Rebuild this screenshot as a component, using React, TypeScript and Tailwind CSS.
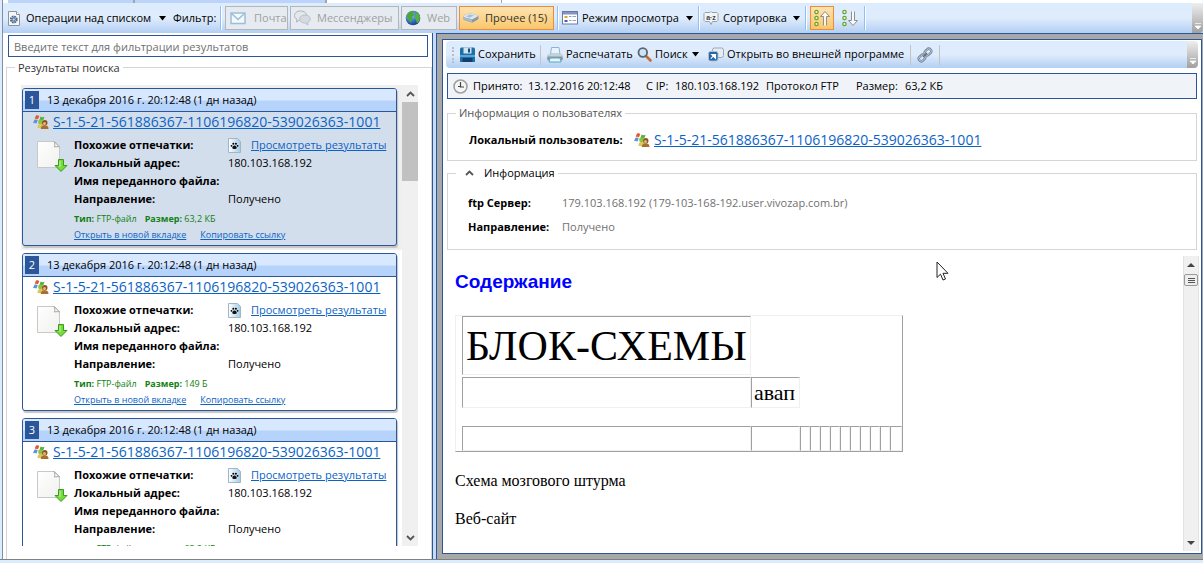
import React from 'react';

interface ResultItem {
  id: number;
  date: string;
  user: string;
  address: string;
  direction: string;
  type: string;
  size: string;
  selected?: boolean;
}

const SID = 'S-1-5-21-561886367-1106196820-539026363-1001';

const results: ResultItem[] = [
  { id: 1, date: '13 декабря 2016 г. 20:12:48 (1 дн назад)', user: SID, address: '180.103.168.192', direction: 'Получено', type: 'FTP-файл', size: '63,2 КБ', selected: true },
  { id: 2, date: '13 декабря 2016 г. 20:12:48 (1 дн назад)', user: SID, address: '180.103.168.192', direction: 'Получено', type: 'FTP-файл', size: '149 Б' },
  { id: 3, date: '13 декабря 2016 г. 20:12:48 (1 дн назад)', user: SID, address: '180.103.168.192', direction: 'Получено', type: 'FTP-файл', size: '63,2 КБ' },
];

// ---------- icons ----------

const Caret = () => (
  <svg width="7" height="5" viewBox="0 0 7 5" className="ml-auto shrink-0"><path d="M0 0h7L3.5 4.5z" fill="#000" /></svg>
);

const PageGearIcon = () => (
  <svg width="12" height="16" viewBox="0 0 12 16" className="shrink-0">
    <path d="M.5 1.5h8l3 3v11H.5z" fill="#f4f6f8" stroke="#8d949b" />
    <path d="M8.500 1.500v3h3" fill="#fff" stroke="#8d949b" />
    <circle cx="5.800" cy="9.500" r="3" fill="#dfe8f4" stroke="#4a6690" strokeWidth="1.800" strokeDasharray="1.700 .66" />
    <circle cx="5.800" cy="9.500" r="1.600" fill="#c5d6ec" stroke="#4a6690" strokeWidth="1" />
  </svg>
);

const MailIcon = () => (
  <svg width="16" height="14" viewBox="0 0 16 14" className="shrink-0">
    <rect x="1" y="2" width="14" height="10.500" fill="#f3f8fb" stroke="#9dbfd6" strokeWidth="1.500" />
    <path d="M1.500 2.500L8 8.500l6.500-6" fill="none" stroke="#9dbfd6" strokeWidth="1.500" />
  </svg>
);

const ChatIcon = () => (
  <svg width="17" height="16" viewBox="0 0 17 16" className="shrink-0">
    <path d="M6.500 1C3 1 .5 3 .5 5.600c0 1.700 1 3 2.500 3.800L2.500 12l3-1.900c4 .3 7-1.700 7-4.500S10 1 6.500 1z" fill="#e3e8ec" stroke="#a9b3bb" />
    <path d="M11 5c-3 0-5.300 1.600-5.300 4S8 13 11 13l3 2-.3-2.600c1.500-.7 2.500-1.900 2.500-3.400C16.200 6.600 14 5 11 5z" fill="#d3dae0" stroke="#b9c2c9" />
  </svg>
);

const GlobeIcon = () => (
  <svg width="16" height="16" viewBox="0 0 16 16" className="shrink-0">
    <defs>
      <radialGradient id="globe" cx=".35" cy=".3" r=".8"><stop offset="0" stopColor="#a5d0f8" /><stop offset=".6" stopColor="#2f68be" /><stop offset="1" stopColor="#123a80" /></radialGradient>
    </defs>
    <circle cx="8" cy="8" r="7.300" fill="url(#globe)" />
    <path d="M3 3l3-2 3 .5-1 2 1.500 1.500L7 7l.5 2L6 13 4 11 3.500 8 1 7z" fill="#4da63a" />
    <path d="M10 2l3 1 2 3.500-.5 4L12 13.500l-1-3.500-1.500-2L11 5z" fill="#58b043" />
  </svg>
);

const DriveIcon = () => (
  <svg width="16" height="12" viewBox="0 0 16 12" className="shrink-0">
    <path d="M.5 4.500Q.5 3.500 2 3l4-1.500q1-.3 2 0l6.500 1.700q1 .3 1 1.300v2q0 .8-1 1.200l-4.500 2.500q-1 .4-2 .1L1.500 8.200q-1-.4-1-1.200z" fill="#8b98a5" />
    <path d="M.5 4.500Q.5 3.500 2 3l4-1.500q1-.3 2 0l6.500 1.700q1 .5 0 1.200L10 7q-1 .4-2 .1L1.500 5.500z" fill="#dfe6ec" />
    <path d="M3 4.500l4-2 4 1-4 2z" fill="#9fbfda" />
    <path d="M.5 5.300L9 7.400v2.900L1.500 8.200q-1-.4-1-1.200z" fill="#aab9c6" />
  </svg>
);

const ViewModeIcon = () => (
  <svg width="16" height="14" viewBox="0 0 16 14" className="shrink-0">
    <rect x=".5" y=".5" width="15" height="12.500" fill="#fff" stroke="#6a7aa8" />
    <rect x="1" y="1" width="14" height="2.500" fill="#8393c4" />
    <rect x="2.500" y="5" width="3" height="2" fill="#e0a33c" /><rect x="2.500" y="9" width="3" height="2" fill="#3c62b0" />
    <path d="M7 5.500h2.500M10.500 5.500H14M7 9.500h2.500M10.500 9.500H14" stroke="#93a0b5" />
  </svg>
);

const SortIcon = () => (
  <svg width="16" height="16" viewBox="0 0 16 16" className="shrink-0">
    <path d="M2 2.500h5l1-1 1 1h5l1 1v7l-1 1H9.500L8 14.500 6.500 11.500H2l-1-1v-7z" fill="#f2f5f8" stroke="#98a2ac" strokeLinejoin="round" />
    <text x="8" y="9.500" textAnchor="middle" fontSize="7" fontWeight="bold" fontFamily="Liberation Sans, sans-serif" fill="#444">a·z</text>
  </svg>
);

const SortDirIcon = ({ down }: { down?: boolean }) => (
  <svg width="17" height="18" viewBox="0 0 17 18" className="shrink-0">
    <g fill="#fff" fillOpacity=".6" stroke="#67a528" strokeWidth="1.200">
      <circle cx="2.500" cy="3" r="1.700" /><circle cx="2.500" cy="9" r="1.700" /><circle cx="2.500" cy="15" r="1.700" />
    </g>
    <path d={down ? 'M9.500 2.500v9H6.500l4.500 5 4.500-5h-3v-9' : 'M9.500 16.500v-9H6.500l4.500-5 4.500 5h-3v9'} fill="#fff" fillOpacity=".8" stroke="#8f8f8f" />
  </svg>
);

const SaveIcon = () => (
  <svg width="15" height="16" viewBox="0 0 15 16" className="shrink-0">
    <path d="M0 1.500L1 .5h13l1 1V15H0z" fill="#1f6fa8" />
    <rect x="3.500" y=".5" width="8" height="6" fill="#cfe4f2" /><rect x="8" y="1.500" width="2" height="4" fill="#1b4a78" />
    <rect x="0" y="8" width="15" height="2" fill="#56a7d8" />
    <rect x="2.500" y="11" width="10" height="4" fill="#123f6e" />
  </svg>
);

const PrintIcon = () => (
  <svg width="16" height="16" viewBox="0 0 16 16" className="shrink-0">
    <path d="M3.500 7l1-6.500h7.500l1 6.500z" fill="#e8f3fb" stroke="#8db4d2" />
    <path d="M1 7h14l1 5-1 1.500H1L0 12z" fill="#8c98a3" /><path d="M1 7h14l.5 2.500H.5z" fill="#c7d0d8" />
    <path d="M3 11h10l1 4H2z" fill="#e4f6fb" stroke="#59a9c6" />
  </svg>
);

const SearchIcon = () => (
  <svg width="15" height="15" viewBox="0 0 15 15" className="shrink-0">
    <path d="M9 9l4.500 4.500" stroke="#c96a35" strokeWidth="2.600" strokeLinecap="round" />
    <circle cx="5.800" cy="5.500" r="4.300" fill="#cfe3f6" stroke="#59656f" strokeWidth="1.800" />
  </svg>
);

const OpenExternalIcon = () => (
  <svg width="16" height="15" viewBox="0 0 16 15" className="shrink-0">
    <rect x="4.500" y="1" width="11" height="9.500" rx="2" fill="#e6ecf2" stroke="#9aa9b8" />
    <rect x=".5" y="4.500" width="9.500" height="9.500" rx="2" fill="#2765a5" stroke="#a9c0d8" />
    <path d="M2.800 11.700l3-3M3.800 7.500H7.500v3.700z" fill="#fff" stroke="#fff" strokeWidth="1.200" />
  </svg>
);

const ChainIcon = () => (
  <svg width="16" height="16" viewBox="0 0 16 16" className="shrink-0" fill="none">
    <g stroke="#6f8196" strokeWidth="2.400"><rect x="8.500" y="1.500" width="5" height="7" rx="2.500" transform="rotate(45 11 5)" /><rect x="2.500" y="7.500" width="5" height="7" rx="2.500" transform="rotate(45 5 11)" /></g>
    <g stroke="#c9d5e0" strokeWidth=".9"><rect x="8.500" y="1.500" width="5" height="7" rx="2.500" transform="rotate(45 11 5)" /><rect x="2.500" y="7.500" width="5" height="7" rx="2.500" transform="rotate(45 5 11)" /></g>
    <path d="M6 10l4-4" stroke="#5d7086" strokeWidth="1.500" />
  </svg>
);

const ClockIcon = () => (
  <svg width="15" height="15" viewBox="0 0 15 15" className="shrink-0">
    <circle cx="7.500" cy="7.500" r="6.500" fill="#f5f5f5" stroke="#a0a0a0" strokeWidth="1.600" />
    <path d="M7.500 3v5H11M5 7.500h2" fill="none" stroke="#444" strokeWidth="1.200" />
  </svg>
);

const UserIcon = () => (
  <svg width="16" height="16" viewBox="0 0 16 16" className="shrink-0">
    <path d="M2.800 1.800c1.200-.8 2.500-.6 3.500.2L5 5.200C4 4.500 2.800 4.500 1.700 5z" fill="#e2572e" />
    <path d="M7.500 2.500c1.200.8 2.500.8 4 .2L10.300 6.300c-1.300.6-2.500.5-3.800-.2z" fill="#4fb43a" />
    <path d="M1.300 6c1.200-.6 2.400-.5 3.400.2L3.500 9.500C2.500 8.800 1.300 8.700 0 9.200z" fill="#5b92dc" />
    <circle cx="7.500" cy="8" r="2.400" fill="#8fbf48" /><path d="M4.500 14c0-3 1-4.300 3.500-4.300S11 11 11 14.500z" fill="#d5c95a" />
    <circle cx="11.800" cy="8.800" r="2.700" fill="#8c5420" /><circle cx="11.500" cy="9.600" r="1.500" fill="#e8b476" />
    <path d="M7.800 15c0-2.500 1.500-3.700 4-3.700s3.700 1.200 3.700 3.700z" fill="#a86f30" />
  </svg>
);

const PawIcon = () => (
  <svg width="13" height="15" viewBox="0 0 13 15" className="shrink-0">
    <defs><linearGradient id="paw" x2="1"><stop stopColor="#fff" /><stop offset="1" stopColor="#a5cbe4" /></linearGradient></defs>
    <path d="M.5.5h9l3 3v11H.5z" fill="url(#paw)" stroke="#9cb7ca" />
    <path d="M6.500 7.500c1.300 0 2.200 1.200 2.200 2.300s-1.200 1.200-2.200 1.200-2.200 0-2.200-1.200.9-2.300 2.200-2.300z" fill="#111" />
    <circle cx="3.500" cy="7.800" r=".9" /><circle cx="5.300" cy="5.700" r="1" /><circle cx="7.900" cy="5.700" r="1" /><circle cx="9.600" cy="7.800" r=".9" />
  </svg>
);

const FileDownIcon = () => (
  <svg width="32" height="32" viewBox="0 0 32 32" className="shrink-0">
    <defs><linearGradient id="sheet" x2="1" y2="1"><stop stopColor="#fff" /><stop offset="1" stopColor="#f0f0ee" /></linearGradient></defs>
    <path d="M1.500 1.500h17l5 5v21h-22z" fill="url(#sheet)" stroke="#c8c8c8" />
    <path d="M18 1.500c1 1.500 1 3.500.5 5.500 2-.5 3.500-.5 5 0z" fill="#fff" stroke="#a5a5a5" />
    <path d="M22.500 19.500h5v6h3.500L25 31.500 19 25.500h3.500z" fill="#76dc3c" stroke="#3c9a1e" />
    <path d="M24 21v6" stroke="#c6f5a6" />
  </svg>
);

const Chevron = ({ down }: { down?: boolean }) => (
  <svg width="9" height="6" viewBox="0 0 9 6" className="shrink-0"><path d={down ? 'M1 1l3.500 3.500L8 1' : 'M1 5l3.500-3.500L8 5'} fill="none" stroke="#555" strokeWidth="1.800" /></svg>
);

// ---------- toolbar pieces ----------

const Separator = () => <span className="h-6 w-px shrink-0 bg-[#8fc0f5] shadow-[1px_0_0_#fff]" />;

const GraySeparator = () => <span className="h-5 w-px shrink-0 bg-[#c3c3c3]" />;

const Overflow = () => (
  <span className="ml-auto flex h-full w-[11px] shrink-0 items-end justify-center rounded-r-sm bg-linear-to-b from-[#efefef] to-[#a0a0a0] pb-1">
    <svg width="6" height="6" viewBox="0 0 6 6"><path d="M0 .5h6M0 3h6L3 6z" fill="#fff" stroke="#fff" strokeWidth=".7" /></svg>
  </span>
);

const MainToolbar = () => (
  <div className="flex h-[30px] shrink-0 items-center overflow-hidden whitespace-nowrap bg-linear-to-b from-[#dcecfe] via-[#dfecfc] to-[#b3cff3] text-[11px]">
    <button className="ml-[5px] flex w-[158px] items-center gap-[6px]"><PageGearIcon /><span>Операции над списком</span><Caret /></button>
    <span className="ml-[7px] w-[47px]">Фильтр:</span>
    <Separator />
    <div className="ml-[4px] flex gap-[2px] text-[#a0a0a0]">
      <button disabled className="flex h-6 w-[63px] items-center gap-[8px] border border-[#b5b5b5] bg-[#e6ebf1] pl-1"><MailIcon />Почта</button>
      <button disabled className="flex h-6 w-[109px] items-center gap-[6px] border border-[#b5b5b5] bg-[#e6ebf1] pl-[3px]"><ChatIcon />Мессенджеры</button>
      <button disabled className="flex h-6 w-[56px] items-center gap-[6px] border border-[#b5b5b5] bg-[#e6ebf1] pl-[3px]"><GlobeIcon />Web</button>
      <button aria-pressed="true" className="flex h-6 w-[95px] items-center gap-[6px] border border-[#f08a3c] bg-linear-to-b from-[#fee3b0] to-[#f9c76a] pl-[3px] text-[#333]"><DriveIcon />Прочее (15)</button>
    </div>
    <span className="ml-[3px] flex"><Separator /></span>
    <button className="ml-[4px] flex w-[131px] items-center gap-[4px]"><ViewModeIcon /><span>Режим просмотра</span><Caret /></button>
    <span className="ml-[5px] flex"><Separator /></span>
    <button className="ml-[4px] flex w-[97px] items-center gap-[4px]"><SortIcon /><span>Сортировка</span><Caret /></button>
    <span className="ml-[5px] flex"><Separator /></span>
    <button aria-label="По возрастанию" aria-pressed="true" className="ml-[4px] flex h-6 w-6 items-center justify-center border border-[#f08a3c] bg-linear-to-b from-[#fee3b0] to-[#f9c76a]"><SortDirIcon /></button>
    <button aria-label="По убыванию" className="ml-[2px] flex h-6 w-[28px] items-center justify-center"><SortDirIcon down /></button>
    <Separator />
    <Overflow />
  </div>
);

// ---------- left pane ----------

const ResultCard = ({ item }: { item: ResultItem }) => (
  <li className={item.selected ? 'bg-[#efefef] pt-[3px] pr-[5px] pb-[4px] pl-px' : 'pt-[3px] pr-[5px] pb-[4px] pl-px'}>
    <article className={`h-[158px] rounded-[3px] border border-[#2b579a] shadow-[1px_2px_1px_#c4c4c4] ${item.selected ? 'bg-[#d3deec]' : 'bg-white'}`}>
      <header className="flex h-[23px] items-center gap-2 rounded-t-[2px] border-b border-[#2b579a] bg-linear-to-b from-[#d8e8ff] from-50% to-[#b5d3fb] to-55% pl-[2px] text-[11px]">
        <span className="flex h-[18px] w-[14px] items-center justify-center bg-[#2b579a] text-white">{item.id}</span>
        <span className="whitespace-nowrap">{item.date}</span>
      </header>
      <div className="flex h-[20px] items-center gap-1 pl-[10px]">
        <UserIcon />
        <a href="#user" className="whitespace-nowrap text-sm leading-5 text-[#0b63c5] underline">{item.user}</a>
      </div>
      <div className="flex pr-[6px] pt-[4px] pl-[13px]">
        <div className="w-[38px] shrink-0 pt-[4px]"><FileDownIcon /></div>
        <div className="min-w-0 flex-1">
          <dl className="grid grid-cols-[154px_minmax(0,1fr)] text-[11px] leading-[18px] whitespace-nowrap">
            <dt className="font-bold">Похожие отпечатки:</dt>
            <dd className="flex items-center gap-[10px]"><PawIcon /><a href="#prints" className="text-[#0b63c5] underline">Просмотреть результаты</a></dd>
            <dt className="font-bold">Локальный адрес:</dt>
            <dd>{item.address}</dd>
            <dt className="font-bold">Имя переданного файла:</dt>
            <dd />
            <dt className="font-bold">Направление:</dt>
            <dd>{item.direction}</dd>
          </dl>
          <p className="mt-[3px] flex gap-2 text-[9px] leading-4 whitespace-nowrap text-[#118011]">
            <span><b>Тип:</b> {item.type}</span>
            <span><b>Размер:</b> {item.size}</span>
          </p>
          <p className="flex gap-[14px] text-[9px] leading-4 whitespace-nowrap text-[#0b63c5]">
            <a href="#tab" className="underline">Открыть в новой вкладке</a>
            <a href="#copy" className="underline">Копировать ссылку</a>
          </p>
        </div>
      </div>
    </article>
  </li>
);

const ResultsPane = () => (
  <section className="flex w-[429px] shrink-0 flex-col">
    <div className="pt-[2px] pr-[4px] pl-[5px]">
      <input
        aria-label="Фильтр результатов"
        placeholder="Введите текст для фильтрации результатов"
        className="block h-[22px] w-full border border-[#2b579a] px-[5px] text-[11px] placeholder:text-[#707070]"
      />
    </div>
    <fieldset className="ml-[3px] flex min-h-0 min-w-0 flex-1 flex-col border border-b-0 border-[#d5d5d5] pl-[14px]">
      <legend className="-ml-[6px] px-[3px] pt-[2px] text-[11px] leading-[18px] text-[#333]">Результаты поиска</legend>
      <div className="mt-[8px] mb-[13px] flex min-h-0 flex-1">
        <ul className="h-full w-[381px] overflow-hidden">
          {results.map((r) => <ResultCard key={r.id} item={r} />)}
        </ul>
        <div className="flex w-4 flex-col items-center bg-[#f0f0f0]">
          <span className="flex h-[17px] items-center"><Chevron /></span>
          <span className="h-[79px] w-full bg-[#c1c1c1]" />
          <span className="mt-auto flex h-[17px] items-center"><Chevron down /></span>
        </div>
      </div>
    </fieldset>
  </section>
);

// ---------- right pane ----------

const ViewerToolbar = () => (
  <div className="mx-[3px] flex h-[27px] shrink-0 items-center overflow-hidden rounded whitespace-nowrap bg-linear-to-b from-[#dcecfe] via-[#dfecfc] to-[#b3cff3] text-[11px]">
    <span className="ml-[6px] h-4 w-0 border-l-2 border-dotted border-[#b9bfc7]" />
    <button className="ml-[6px] flex w-[80px] items-center gap-[3px]"><SaveIcon />Сохранить</button>
    <GraySeparator />
    <button className="ml-[6px] flex w-[90px] items-center gap-[3px]"><PrintIcon />Распечатать</button>
    <button className="flex w-[62px] items-center gap-[3px]"><SearchIcon /><span>Поиск</span><Caret /></button>
    <button className="ml-[9px] flex w-[202px] items-center gap-[3px]"><OpenExternalIcon />Открыть во внешней программе</button>
    <GraySeparator />
    <button aria-label="Ссылка" className="flex w-[28px] justify-center"><ChainIcon /></button>
    <GraySeparator />
    <Overflow />
  </div>
);

const narrowCells = Array.from({ length: 10 }, (_, i) => i);
const cell = 'border border-t-[#a0a0a0] border-l-[#a0a0a0] border-r-[#f0f0f0] border-b-[#f0f0f0]';

const DocumentView = () => (
  <div className="mt-[6px] mr-[2px] mb-[2px] flex min-h-0 flex-1">
    <article className="min-w-0 flex-1 overflow-hidden pl-[12px] font-['Liberation_Serif',serif] text-base leading-[18px]">
      <h1 className="mt-[14px] font-['Liberation_Sans',sans-serif] text-[19px] leading-6 font-bold text-[#0000ff]">Содержание</h1>
      <table className="mt-[21px] w-[448px] table-fixed border-separate border-spacing-0 border border-t-[#f0f0f0] border-l-[#f0f0f0] border-r-[#a0a0a0] border-b-[#a0a0a0] whitespace-nowrap">
        <colgroup>
          <col className="w-[6px]" /><col className="w-[289px]" /><col className="w-[49px]" />
          {narrowCells.map((n) => <col key={n} className={n === 9 ? 'w-[12px]' : 'w-[10px]'} />)}
        </colgroup>
        <tbody>
          <tr className="h-[59px]"><td /><td className={`${cell} pl-[3px] text-[42px] leading-[56px]`}>БЛОК-СХЕМЫ</td><td colSpan={11} /></tr>
          <tr className="h-[2px]"><td colSpan={13} /></tr>
          <tr className="h-[31px]"><td /><td className={cell} /><td className={`${cell} pl-[2px] text-[22px] leading-[28px]`}>авап</td><td colSpan={10} /></tr>
          <tr className="h-[18px]"><td colSpan={13} /></tr>
          <tr className="h-[25px]"><td /><td className={cell} /><td className={cell} />{narrowCells.map((n) => <td key={n} className={cell} />)}</tr>
        </tbody>
      </table>
      <p className="mt-[20px]">Схема мозгового штурма</p>
      <p className="mt-[20px]">Веб-сайт</p>
    </article>
    <div className="flex w-4 shrink-0 flex-col items-center border-x border-[#e3e3e3] bg-[#f0f0f0]">
      <svg width="8" height="4" viewBox="0 0 8 4" className="mt-[7px]"><path d="M4 0l4 4H0z" fill="#444" /></svg>
      <span className="mt-[7px] flex h-[12px] w-[14px] flex-col items-center justify-center gap-px rounded-xs border border-[#999] bg-[#eee]">
        <span className="h-px w-[7px] bg-[#555]" /><span className="h-px w-[7px] bg-[#555]" /><span className="h-px w-[7px] bg-[#555]" />
      </span>
      <svg width="8" height="4" viewBox="0 0 8 4" className="mt-auto mb-[6px]"><path d="M0 0h8L4 4z" fill="#444" /></svg>
    </div>
  </div>
);

const ViewerPane = () => (
  <section className="flex min-w-0 flex-1 border-t border-l border-[#2b579a] bg-[#a8a8a8] pt-[5px] pr-px pb-[5px] pl-[5px]">
    <div className="flex min-w-0 flex-1 flex-col border border-[#2b579a] bg-white pt-px">
      <ViewerToolbar />
      <div className="mx-1 mt-[5px] flex h-[26px] shrink-0 items-center border border-[#2b579a] bg-[#f0f4f9] pt-px pl-[5px] text-[11px] whitespace-nowrap">
        <ClockIcon />
        <span className="ml-[5px] w-[55px]">Принято:</span>
        <span className="w-[118px]">13.12.2016 20:12:48</span>
        <span className="w-[29px]">С IP:</span>
        <span className="w-[91px]">180.103.168.192</span>
        <span className="w-[90px]">Протокол FTP</span>
        <span className="w-[49px]">Размер:</span>
        <span>63,2 КБ</span>
      </div>
      <fieldset className="mx-1 mt-[5px] min-w-0 shrink-0 border border-[#d5d5d5] pb-[10px] pl-[21px] text-[11px]">
        <legend className="-ml-[13px] px-[3px] leading-[18px] text-[#555]">Информация о пользователях</legend>
        <div className="mt-[8px] flex h-5 items-center whitespace-nowrap">
          <span className="w-[165px] font-bold">Локальный пользователь:</span>
          <UserIcon />
          <a href="#user" className="ml-1 text-sm leading-5 text-[#0b63c5] underline">{SID}</a>
        </div>
      </fieldset>
      <fieldset className="mx-1 mt-[3px] min-w-0 shrink-0 border border-[#d5d5d5] pb-[10px] pl-[20px] text-[11px]">
        <legend className="-ml-[12px] px-[3px] leading-[18px]">
          <button aria-expanded="true" className="flex items-center gap-[10px] pl-[6px]"><Chevron />Информация</button>
        </legend>
        <dl className="mt-[9px] grid grid-cols-[94px_1fr] leading-6 text-[#707070]">
          <dt className="font-bold text-black">ftp Сервер:</dt>
          <dd>179.103.168.192 (179-103-168-192.user.vivozap.com.br)</dd>
          <dt className="font-bold text-black">Направление:</dt>
          <dd>Получено</dd>
        </dl>
      </fieldset>
      <DocumentView />
    </div>
  </section>
);

const App: React.FC = () => {
  return (
    <div className="relative flex h-screen flex-col overflow-hidden bg-[#dcecfc] font-['Open_Sans',sans-serif] text-black">
      <div className="flex min-h-0 flex-1 border-b border-[#808080]">
        <div className="w-[3px] shrink-0 border-r border-[#7f8fa5] bg-[#dcecfc]" />
        <div className="flex min-w-0 flex-1 flex-col bg-white">
          <div className="flex h-[3px] shrink-0 pl-[5px]">
            <span className="w-[127px] border-r-2 border-[#a5a5a5] bg-[#bcd3fa]" />
            <span className="w-[192px] border-r-2 border-[#a5a5a5] bg-[#bcd3fa]" />
            <span className="w-[175px] border-r border-[#a5a5a5]" />
          </div>
          <MainToolbar />
          <div className="flex min-h-0 flex-1">
            <ResultsPane />
            <div className="w-[4px] shrink-0 border-l border-[#2b579a] bg-[#c6dbf7]" />
            <ViewerPane />
          </div>
        </div>
      </div>
      <div className="h-[3px] shrink-0" />
      <svg width="13" height="20" viewBox="0 0 13 20" className="absolute top-[261px] left-[936px]"><path d="M1 1v15.500l3.500-3.300L7 19l2.500-1L7 12.300h5z" fill="#fff" stroke="#222" strokeLinejoin="round" /></svg>
    </div>
  );
};

export default App;
